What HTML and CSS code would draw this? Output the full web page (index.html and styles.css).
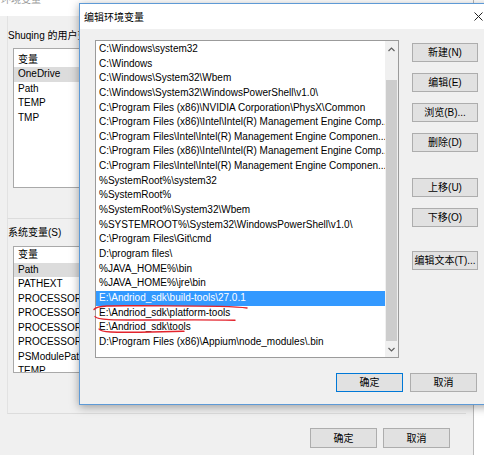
FILE: index.html
```html
<!DOCTYPE html>
<html lang="zh-CN">
<head>
<meta charset="utf-8">
<title>编辑环境变量</title>
<link rel="stylesheet" href="styles.css">
</head>
<body>
<div class="desk">
  <div class="main">
    <div class="main-title"><span>环境变量</span></div>
    <div class="main-body">
      <div class="group group-user">
        <div class="glabel">Shuqing 的用户变量(U)</div>
        <div class="vlist vlist-user">
          <div class="vhead vhead-user">变量</div>
          <div class="vrow hl">OneDrive</div>
          <div class="vrow">Path</div>
          <div class="vrow">TEMP</div>
          <div class="vrow">TMP</div>
        </div>
      </div>
      <div class="group group-sys">
        <div class="glabel">系统变量(S)</div>
        <div class="vlist vlist-sys">
          <div class="vhead vhead-sys">变量</div>
          <div class="vrow hl">Path</div>
          <div class="vrow">PATHEXT</div>
          <div class="vrow">PROCESSOR_ARCHITECTURE</div>
          <div class="vrow">PROCESSOR_IDENTIFIER</div>
          <div class="vrow">PROCESSOR_LEVEL</div>
          <div class="vrow">PROCESSOR_REVISION</div>
          <div class="vrow">PSModulePath</div>
          <div class="vrow">TEMP</div>
          <div class="vrow">TMP</div>
        </div>
      </div>
      <div class="main-foot">
        <button class="btn btn-main">确定</button>
        <button class="btn btn-main">取消</button>
      </div>
    </div>
  </div>

  <div class="dialog">
    <div class="dlg-title">
      <span class="dlg-name">编辑环境变量</span>
      <span class="dlg-close"><svg width="9" height="9" viewBox="0 0 9 9"><path d="M0.5 0.5 L8.5 8.5 M8.5 0.5 L0.5 8.5" stroke="#222" stroke-width="1" fill="none"/></svg></span>
    </div>
    <div class="dlg-body">
      <div class="dlg-main">
        <div class="plist">
          <div class="prows">
            <div class="prow">C:\Windows\system32</div>
            <div class="prow">C:\Windows</div>
            <div class="prow">C:\Windows\System32\Wbem</div>
            <div class="prow">C:\Windows\System32\WindowsPowerShell\v1.0\</div>
            <div class="prow">C:\Program Files (x86)\NVIDIA Corporation\PhysX\Common</div>
            <div class="prow">C:\Program Files (x86)\Intel\Intel(R) Management Engine Comp...</div>
            <div class="prow">C:\Program Files\Intel\Intel(R) Management Engine Componen...</div>
            <div class="prow">C:\Program Files (x86)\Intel\Intel(R) Management Engine Comp...</div>
            <div class="prow">C:\Program Files\Intel\Intel(R) Management Engine Componen...</div>
            <div class="prow">%SystemRoot%\system32</div>
            <div class="prow">%SystemRoot%</div>
            <div class="prow">%SystemRoot%\System32\Wbem</div>
            <div class="prow">%SYSTEMROOT%\System32\WindowsPowerShell\v1.0\</div>
            <div class="prow">C:\Program Files\Git\cmd</div>
            <div class="prow">D:\program files\</div>
            <div class="prow">%JAVA_HOME%\bin</div>
            <div class="prow">%JAVA_HOME%\jre\bin</div>
            <div class="prow sel">E:\Andriod_sdk\build-tools\27.0.1</div>
            <div class="prow">E:\Andriod_sdk\platform-tools</div>
            <div class="prow">E:\Andriod_sdk\tools</div>
            <div class="prow">D:\Program Files (x86)\Appium\node_modules\.bin</div>
          </div>
          <div class="vscroll">
            <div class="sb-arrow"><svg width="7" height="5" viewBox="0 0 7 5"><path d="M0.5 4 L3.5 1 L6.5 4" stroke="#606060" stroke-width="1.2" fill="none"/></svg></div>
            <div class="sb-thumb"></div>
            <div class="sb-arrow sb-down"><svg width="7" height="5" viewBox="0 0 7 5"><path d="M0.5 1 L3.5 4 L6.5 1" stroke="#606060" stroke-width="1.2" fill="none"/></svg></div>
          </div>
        </div>
        <div class="side">
          <button class="btn btn-side">新建(N)</button>
          <button class="btn btn-side">编辑(E)</button>
          <button class="btn btn-side">浏览(B)...</button>
          <button class="btn btn-side">删除(D)</button>
          <button class="btn btn-side gap-big">上移(U)</button>
          <button class="btn btn-side">下移(O)</button>
          <button class="btn btn-side gap-text">编辑文本(T)...</button>
        </div>
      </div>
      <div class="dlg-foot">
        <button class="btn btn-dlg btn-default">确定</button>
        <button class="btn btn-dlg">取消</button>
      </div>
    </div>
  </div>

  <svg class="ink" width="484" height="464" viewBox="0 0 484 464">
    <path d="M94 309.5 C97 305.5 110 305.5 140 305.8 S228 305.2 247 308" />
    <path d="M95 316.5 C97 320 112 320.2 150 320 S222 319.6 235 320.3" />
    <path d="M99 329 C101 332.5 115 332.4 140 332.2 S174 331.6 184 331.2" />
  </svg>
</div>
</body>
</html>
```

FILE: styles.css
```css
* { box-sizing: border-box; }
html, body { margin: 0; padding: 0; }
body {
  width: 484px;
  height: 464px;
  overflow: hidden;
  background: #ffffff;
  font-family: "Liberation Sans", "Noto Sans CJK SC", sans-serif;
  font-size: 10px;
  color: #000;
}
.desk {
  position: relative;
  width: 484px;
  height: 464px;
  overflow: hidden;
}

/* background window */
.main {
  width: 474px;
  height: 455px;
  background: #f0f0f0;
  border-right: 1px solid #b9b9b9;
  display: flex;
  flex-direction: column;
}
.main-title {
  height: 16px;
  background: #ffffff;
  overflow: hidden;
  padding-left: 1px;
}
.main-title span {
  display: block;
  margin-top: -6px;
  line-height: 12px;
  color: #9a9a9a;
}
.main-body {
  padding-left: 7px;
  display: flex;
  flex-direction: column;
}
.group {
  width: 459px;
  border-left: 1px solid #e2e2e2;
  border-bottom: 1px solid #dcdcdc;
}
.group-user {
  height: 203px;
  padding-top: 14px;
}
.group-sys {
  height: 195px;
  padding-top: 8px;
}
.glabel {
  line-height: 12px;
  height: 12px;
  white-space: nowrap;
}
.vlist {
  margin-left: 5px;
  background: #ffffff;
  border: 1px solid #a9a9a9;
  width: 440px;
  overflow: hidden;
}
.vlist-user {
  margin-top: 6px;
  height: 140px;
}
.vlist-sys {
  margin-top: 7px;
  height: 127px;
}
.vhead {
  padding-left: 4px;
  line-height: 14.5px;
}
.vhead-user { height: 18px; padding-top: 3.5px; }
.vhead-sys { height: 15.75px; padding-top: 1px; }
.vrow {
  height: 14.5px;
  line-height: 14.5px;
  padding-left: 4px;
  white-space: nowrap;
}
.vrow.hl { background: #dcdcdc; }
.main-foot {
  display: flex;
  justify-content: flex-end;
  gap: 6px;
  padding-top: 14px;
  padding-right: 23px;
}

.btn {
  font-family: "Liberation Sans", "Noto Sans CJK SC", sans-serif;
  font-size: 10px;
  color: #000;
  background: #e1e1e1;
  border: 1px solid #adadad;
  border-radius: 0;
  padding: 0;
  margin: 0;
  line-height: 17px;
  text-align: center;
  white-space: nowrap;
}
.btn-main { width: 67px; height: 20px; }

/* foreground dialog */
.dialog {
  position: absolute;
  left: 79px;
  top: 3px;
  width: 420px;
  height: 402px;
  border: 1px solid #5e9ad6;
  background: #f0f0f0;
  box-shadow: 0 2px 9px rgba(0, 0, 0, 0.35);
  display: flex;
  flex-direction: column;
}
.dlg-title {
  height: 25px;
  background: #ffffff;
  display: flex;
  align-items: center;
  padding-left: 4px;
}
.dlg-name {
  line-height: 23px;
  padding-top: 1px;
}
.dlg-close {
  margin-left: auto;
  margin-right: 3px;
  width: 34px;
  height: 25px;
  display: flex;
  align-items: center;
  justify-content: center;
}
.dlg-body {
  padding: 11px 0 0 15px;
  display: flex;
  flex-direction: column;
}
.dlg-main {
  display: flex;
  gap: 13px;
}
.plist {
  width: 304px;
  height: 318px;
  background: #ffffff;
  border: 1px solid #9b9b9b;
  display: flex;
}
.prows {
  width: 289px;
  padding-top: 1px;
}
.prow {
  height: 14.65px;
  line-height: 14.65px;
  padding-left: 3px;
  white-space: nowrap;
  overflow: hidden;
}
.prow.sel {
  background: #3399ff;
  color: #ffffff;
}
.vscroll {
  width: 13px;
  background: #f0f0f0;
  display: flex;
  flex-direction: column;
  align-items: center;
}
.sb-arrow {
  width: 13px;
  height: 16px;
  display: flex;
  align-items: center;
  justify-content: center;
}
.sb-down { margin-top: auto; }
.sb-thumb {
  width: 11px;
  height: 261px;
  margin-top: 23px;
  background: #cdcdcd;
}
.side {
  display: flex;
  flex-direction: column;
  gap: 11px;
  padding-top: 3px;
}
.btn-side { width: 66px; height: 19px; }
.side .gap-big { margin-top: 15px; }
.side .gap-text { margin-top: 13px; }
.dlg-foot {
  display: flex;
  justify-content: flex-end;
  gap: 7px;
  padding-top: 15px;
  padding-right: 21px;
}
.btn-dlg { width: 67px; height: 19px; }
.btn-default { border-color: #0078d7; }

.ink {
  position: absolute;
  left: 0;
  top: 0;
  pointer-events: none;
}
.ink path {
  fill: none;
  stroke: #e3232c;
  stroke-width: 1.4;
  stroke-linecap: round;
}
```
